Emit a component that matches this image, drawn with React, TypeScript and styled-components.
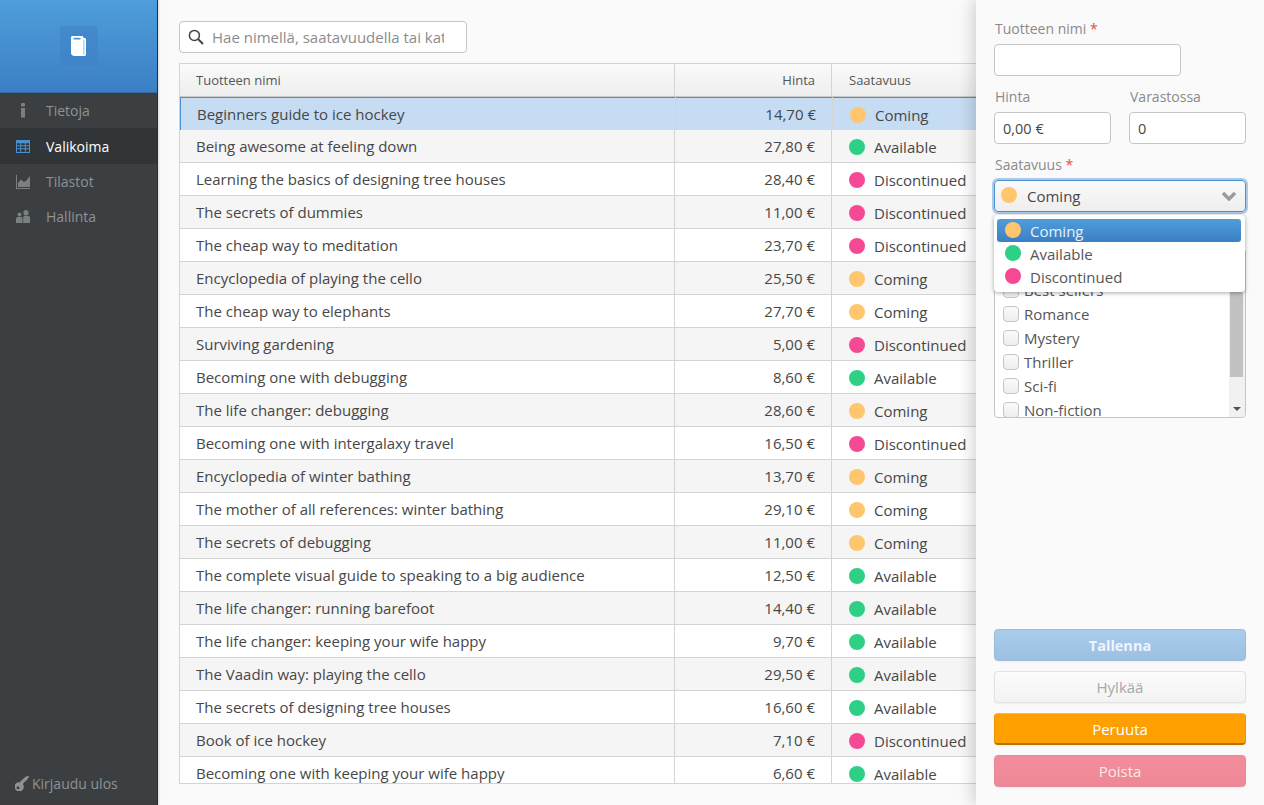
import React from "react";
import styled, { createGlobalStyle } from "styled-components";

type Status = "Coming" | "Available" | "Discontinued";

const statusColor: Record<Status, string> = {
    Coming: "#ffc66e",
    Available: "#2dd085",
    Discontinued: "#f54993",
};

const products: [string, string, Status][] = [
    ["Beginners guide to ice hockey", "14,70 €", "Coming"],
    ["Being awesome at feeling down", "27,80 €", "Available"],
    ["Learning the basics of designing tree houses", "28,40 €", "Discontinued"],
    ["The secrets of dummies", "11,00 €", "Discontinued"],
    ["The cheap way to meditation", "23,70 €", "Discontinued"],
    ["Encyclopedia of playing the cello", "25,50 €", "Coming"],
    ["The cheap way to elephants", "27,70 €", "Coming"],
    ["Surviving gardening", "5,00 €", "Discontinued"],
    ["Becoming one with debugging", "8,60 €", "Available"],
    ["The life changer: debugging", "28,60 €", "Coming"],
    ["Becoming one with intergalaxy travel", "16,50 €", "Discontinued"],
    ["Encyclopedia of winter bathing", "13,70 €", "Coming"],
    ["The mother of all references: winter bathing", "29,10 €", "Coming"],
    ["The secrets of debugging", "11,00 €", "Coming"],
    ["The complete visual guide to speaking to a big audience", "12,50 €", "Available"],
    ["The life changer: running barefoot", "14,40 €", "Available"],
    ["The life changer: keeping your wife happy", "9,70 €", "Available"],
    ["The Vaadin way: playing the cello", "29,50 €", "Available"],
    ["The secrets of designing tree houses", "16,60 €", "Available"],
    ["Book of ice hockey", "7,10 €", "Discontinued"],
    ["Becoming one with keeping your wife happy", "6,60 €", "Available"],
];

const categories = ["Children's books", "Best sellers", "Romance", "Mystery", "Thriller", "Sci-fi", "Non-fiction"];

const App = () => {
    return (
        <Page>
            <GlobalStyle/>
            <Sidebar>
                <Brand>
                    <BrandTile>
                        <svg width="17" height="22" viewBox="0 0 17 22">
                            <path d="M1 2.5C1 1.6 1.6 1 2.5 1H12c.8 0 1.4.6 1.4 1.4V3h1.1c.8 0 1.5.7 1.5 1.5V19.5c0 .8-.7 1.5-1.5 1.5H4.5C2.5 21 1 19.6 1 18Z" fill="#fff"/>
                            <rect x="3.5" y="2.8" width="7" height="1.7" fill="#4a94d4"/>
                            <rect x="13.4" y="4.5" width="1" height="15" fill="#8fbde6"/>
                        </svg>
                    </BrandTile>
                </Brand>
                <NavItem>
                    <NavIcon>
                        <svg width="6" height="15" viewBox="0 0 6 15" fill="currentColor">
                            <rect x="1" y="0" width="4" height="3.4" rx="1"/>
                            <path d="M0.8 5H5V14.5H1V6.2H.8Z"/>
                        </svg>
                    </NavIcon>
                    Tietoja
                </NavItem>
                <NavItem $active>
                    <NavIcon>
                        <svg width="14" height="13" viewBox="0 0 14 13" fill="#4a90d0">
                            <path d="M0 0H14V13H0ZM1 3.2V5.2H4.2V3.2ZM5.2 3.2V5.2H8.8V3.2ZM9.8 3.2V5.2H13V3.2ZM1 6.2V8.2H4.2V6.2ZM5.2 6.2V8.2H8.8V6.2ZM9.8 6.2V8.2H13V6.2ZM1 9.2V12H4.2V9.2ZM5.2 9.2V12H8.8V9.2ZM9.8 9.2V12H13V9.2Z" fillRule="evenodd"/>
                        </svg>
                    </NavIcon>
                    Valikoima
                </NavItem>
                <NavItem>
                    <NavIcon>
                        <svg width="14" height="14" viewBox="0 0 14 14" fill="currentColor">
                            <path d="M0 0H1V13H14V14H0Z"/>
                            <path d="M2 12V8L5 4.5L8 7L10.5 5.5L14 1V12Z"/>
                        </svg>
                    </NavIcon>
                    Tilastot
                </NavItem>
                <NavItem>
                    <NavIcon>
                        <svg width="14" height="13" viewBox="0 0 14 13" fill="currentColor">
                            <circle cx="3.5" cy="4.5" r="2"/>
                            <path d="M0 13V9C0 7.6 1 7 2 7H5C6 7 6.5 7.6 6.5 9V13Z"/>
                            <circle cx="10" cy="2.7" r="2.6"/>
                            <path d="M7.2 13V7.5C7.2 6.4 8 5.8 9 5.8H11C12.7 5.8 14 6.6 14 8V13Z"/>
                        </svg>
                    </NavIcon>
                    Hallinta
                </NavItem>
                <Logout>
                    <svg width="14" height="15" viewBox="0 0 14 15" fill="currentColor">
                        <path d="M4.6 6.2 10.8.4 13.6 0 14 1.6 12.6 2.2 12.4 4 10.8 4.2 10.6 5.8 9 6 8 8.2A4.6 4.6 0 1 1 4.6 6.2ZM3 10.2A1.5 1.5 0 1 0 3 13.2 1.5 1.5 0 0 0 3 10.2Z" fillRule="evenodd"/>
                    </svg>
                    Kirjaudu ulos
                </Logout>
            </Sidebar>

            <Main>
                <Search>
                    <svg width="16" height="16" viewBox="0 0 16 16" fill="none" stroke="#444" strokeWidth="1.5">
                        <circle cx="6.4" cy="6.4" r="5"/>
                        <path d="M10 10L15 15" strokeWidth="2"/>
                    </svg>
                    <SearchInput placeholder="Hae nimellä, saatavuudella tai kategorialla"/>
                </Search>
                <Table>
                    <HeadRow>
                        <HeadCell $col="name">Tuotteen nimi</HeadCell>
                        <HeadCell $col="price">Hinta</HeadCell>
                        <HeadCell $col="status">Saatavuus</HeadCell>
                    </HeadRow>
                    {products.map(([name, price, status], i) => (
                        <Row key={name} $even={i % 2 === 1} $selected={i === 0}>
                            <Cell $col="name">{name}</Cell>
                            <Cell $col="price">{price}</Cell>
                            <Cell $col="status">
                                <StatusText>
                                    <Dot $status={status}/>
                                    {status}
                                </StatusText>
                            </Cell>
                        </Row>
                    ))}
                </Table>
            </Main>

            <Panel>
                <Field>
                    <Label>Tuotteen nimi <Star>*</Star></Label>
                    <NameInput/>
                </Field>
                <FieldRow>
                    <Field>
                        <Label>Hinta</Label>
                        <TextInput defaultValue="0,00 €"/>
                    </Field>
                    <Field>
                        <Label>Varastossa</Label>
                        <TextInput defaultValue="0"/>
                    </Field>
                </FieldRow>
                <Field>
                    <Label>Saatavuus <Star>*</Star></Label>
                    <Select>
                        <SelectDot $status="Coming"/>
                        <SelectValue>Coming</SelectValue>
                        <svg width="16" height="10" viewBox="0 0 16 10" fill="none" stroke="#9a9a9a" strokeWidth="3.4">
                            <path d="M2 2L8 8L14 2"/>
                        </svg>
                        <Dropdown>
                            {(["Coming", "Available", "Discontinued"] as Status[]).map((s, i) => (
                                <Option key={s} $active={i === 0}>
                                    <SelectDot $status={s}/>
                                    {s}
                                </Option>
                            ))}
                        </Dropdown>
                    </Select>
                </Field>
                <Field>
                    <Label>Kategoria</Label>
                    <CategoryBox>
                        <CategoryList>
                            {categories.map((c) => (
                                <Category key={c}>
                                    <Check/>
                                    {c}
                                </Category>
                            ))}
                        </CategoryList>
                        <ScrollTrack>
                            <ScrollThumb/>
                            <ScrollArrow/>
                        </ScrollTrack>
                    </CategoryBox>
                </Field>
                <Buttons>
                    <SaveButton>Tallenna</SaveButton>
                    <DiscardButton>Hylkää</DiscardButton>
                    <CancelButton>Peruuta</CancelButton>
                    <DeleteButton>Poista</DeleteButton>
                </Buttons>
            </Panel>
        </Page>
    );
};

export default App;

const GlobalStyle = createGlobalStyle`
    html, body {
        margin: 0;
        height: 100%;
        overflow: hidden;
    }
    #root {
        height: 100%;
    }
    * {
        box-sizing: border-box;
    }
    body {
        font-family: "Open Sans", "Liberation Sans", sans-serif;
        font-size: 14px;
        color: #474747;
    }
`

const Page = styled.div`
    position: relative;
    display: flex;
    height: 805px;
    overflow: hidden;
    background: #fafafa;
`

const Sidebar = styled.nav`
    width: 158px;
    flex-shrink: 0;
    display: flex;
    flex-direction: column;
    background: #3b3f42;
    border-right: 1px solid #2b2e30;
    box-shadow: 1px 0 2px rgba(0, 0, 0, 0.12);
`

const Brand = styled.div`
    height: 93px;
    display: flex;
    align-items: center;
    justify-content: center;
    background: linear-gradient(to bottom, #4f9edb, #3b7fc4);
    border-bottom: 1px solid #34699f;
`

const BrandTile = styled.div`
    width: 38px;
    height: 40px;
    margin-top: -1px;
    display: flex;
    align-items: center;
    justify-content: center;
    border-radius: 4px;
    background: rgba(62, 130, 196, 0.55);
`

const NavItem = styled.div<{ $active?: boolean }>`
    height: ${(p) => (p.$active ? "36px" : "35px")};
    display: flex;
    align-items: center;
    font-size: 14px;
    color: ${(p) => (p.$active ? "#fff" : "#8f9294")};
    background: ${(p) => (p.$active ? "#323538" : "transparent")};
`

const NavIcon = styled.span`
    width: 46px;
    padding-left: 16px;
    padding-right: 16px;
    flex-shrink: 0;
    display: flex;
    justify-content: center;
    color: #7c7f81;
`

const Logout = styled.div`
    margin-top: auto;
    height: 44px;
    padding-left: 15px;
    display: flex;
    align-items: center;
    gap: 3px;
    font-size: 14px;
    color: #8f9294;
`

const Main = styled.main`
    flex: 1;
    min-width: 0;
    display: flex;
    flex-direction: column;
    padding: 21px 21px 21px;
`

const Search = styled.label`
    width: 288px;
    height: 32px;
    flex-shrink: 0;
    display: flex;
    align-items: center;
    gap: 8px;
    padding-left: 8px;
    padding-right: 22px;
    margin-bottom: 10px;
    background: #fff;
    border: 1px solid #c5c5c5;
    border-radius: 4px;
`

const SearchInput = styled.input`
    flex: 1;
    min-width: 0;
    padding: 0;
    border: 0;
    outline: 0;
    background: transparent;
    font: 400 15px "Open Sans", sans-serif;
    &::placeholder {
        color: #8c8c8c;
        opacity: 1;
    }
`

const Table = styled.div`
    flex: 1;
    min-height: 0;
    overflow: hidden;
    background: #fff;
    border: 1px solid #d4d4d4;
`

const colStyles = {
    name: `width: 495px; padding-left: 16px;`,
    price: `width: 157px; padding-right: 16px; justify-content: flex-end;`,
    status: `flex: 1; padding-left: 17px;`,
}

type Col = keyof typeof colStyles;

const HeadRow = styled.div`
    height: 33px;
    display: flex;
    background: linear-gradient(to bottom, #fafafa, #eeeeee);
    border-bottom: 1px solid #c9c9c9;
`

const HeadCell = styled.div<{ $col: Col }>`
    ${(p) => colStyles[p.$col]}
    display: flex;
    align-items: center;
    font-size: 13px;
    color: #555;
    border-right: ${(p) => (p.$col === "status" ? "0" : "1px solid #d4d4d4")};
`

const Row = styled.div<{ $even: boolean; $selected: boolean }>`
    height: 33px;
    display: flex;
    background: ${(p) => (p.$selected ? "#c5dcf2" : p.$even ? "#f5f5f5" : "#fff")};
    border-bottom: 1px solid #d4d4d4;
    ${(p) => p.$selected && `
        border-bottom: 0;
        padding-left: 1px;
        box-shadow: inset 1px 1px 0 #4a90d0;
    `}
`

const Cell = styled.div<{ $col: Col }>`
    ${(p) => colStyles[p.$col]}
    display: flex;
    align-items: center;
    flex-shrink: 0;
    font-size: 15px;
    white-space: nowrap;
    border-right: ${(p) => (p.$col === "status" ? "0" : "1px solid #d4d4d4")};
`

const StatusText = styled.span`
    display: flex;
    align-items: center;
    gap: 9px;
    margin-top: 2px;
`

const Dot = styled.span<{ $status: Status }>`
    width: 16px;
    height: 16px;
    flex-shrink: 0;
    border-radius: 50%;
    background: ${(p) => statusColor[p.$status]};
`

const SelectDot = styled(Dot)`
    margin-top: -2px;
`

const Panel = styled.aside`
    position: absolute;
    top: 0;
    right: 0;
    bottom: 0;
    width: 288px;
    display: flex;
    flex-direction: column;
    gap: 11px;
    padding: 19px 18px 18px;
    background: #fafafa;
    box-shadow: -4px 0 14px rgba(0, 0, 0, 0.16);
`

const Field = styled.div`
    display: flex;
    flex-direction: column;
    min-width: 0;
`

const FieldRow = styled.div`
    display: grid;
    grid-template-columns: 117px 117px;
    gap: 18px;
`

const Label = styled.label`
    height: 20px;
    margin-bottom: 5px;
    padding-left: 1px;
    line-height: 20px;
    font-size: 14px;
    color: #8a8a8a;
`

const Star = styled.span`
    color: #ed473b;
`

const TextInput = styled.input`
    width: 100%;
    height: 32px;
    padding: 0 8px;
    background: #fff;
    border: 1px solid #c5c5c5;
    border-radius: 4px;
    outline: 0;
    font: 400 14.5px "Open Sans", sans-serif;
    color: #474747;
`

const NameInput = styled(TextInput)`
    width: 187px;
`

const Select = styled.div`
    position: relative;
    height: 32px;
    display: flex;
    align-items: center;
    gap: 10px;
    padding: 0 8px 0 6px;
    background: linear-gradient(to bottom, #fafafa, #eeeeee);
    border: 1px solid #4a90d0;
    border-radius: 4px;
    box-shadow: 0 0 0 2px rgba(74, 144, 208, 0.45);
    font-size: 15px;
`

const SelectValue = styled.span`
    flex: 1;
`

const Dropdown = styled.div`
    position: absolute;
    z-index: 2;
    top: 34px;
    left: -1px;
    width: 251px;
    padding: 4px 4px 4px 3px;
    background: #fff;
    border-radius: 4px;
    box-shadow: 0 1px 4px rgba(0, 0, 0, 0.35);
`

const Option = styled.div<{ $active: boolean }>`
    height: 23px;
    display: flex;
    align-items: center;
    gap: 9px;
    padding-left: 8px;
    border-radius: 3px;
    color: ${(p) => (p.$active ? "#e6f1fb" : "#555")};
    background: ${(p) => (p.$active ? "linear-gradient(to bottom, #4f9edb, #3b7fc4)" : "transparent")};
`

const CategoryBox = styled.div`
    height: 170px;
    display: flex;
    overflow: hidden;
    background: #fff;
    border: 1px solid #c5c5c5;
    border-radius: 4px;
`

const CategoryList = styled.div`
    flex: 1;
    padding: 5px 0 0 8px;
`

const Category = styled.div`
    height: 24px;
    display: flex;
    align-items: center;
    gap: 5px;
    font-size: 15px;
    color: #555;
`

const Check = styled.span`
    width: 16px;
    height: 16px;
    border: 1px solid #c5c5c5;
    border-radius: 4px;
    background: linear-gradient(to bottom, #fafafa, #eeeeee);
`

const ScrollTrack = styled.div`
    width: 16px;
    display: flex;
    flex-direction: column;
    background: #f1f1f1;
    padding-left: 1px;
`

const ScrollThumb = styled.div`
    width: 13px;
    height: 128px;
    background: #c1c1c1;
`

const ScrollArrow = styled.div`
    margin: auto 0 6px 3px;
    width: 0;
    height: 0;
    border-left: 4px solid transparent;
    border-right: 4px solid transparent;
    border-top: 4px solid #505050;
`

const Buttons = styled.div`
    margin-top: auto;
    display: flex;
    flex-direction: column;
    gap: 10px;
`

const Button = styled.button`
    height: 32px;
    width: 252px;
    padding: 0;
    border-radius: 4px;
    font: 400 15px "Open Sans", sans-serif;
    box-shadow: 0 1px 2px rgba(0, 0, 0, 0.05);
`

const SaveButton = styled(Button)`
    font-size: 14.5px;
    font-weight: 700;
    color: #eef5fc;
    background: linear-gradient(to bottom, #a9cdeb, #9dbfe3);
    border: 1px solid #9cbcdc;
`

const DiscardButton = styled(Button)`
    color: #a8a8a8;
    background: linear-gradient(to bottom, #fbfbfb, #f3f3f3);
    border: 1px solid #e2e2e2;
`

const CancelButton = styled(Button)`
    color: #fff;
    background: #ff9f00;
    border: 1px solid #f09700;
    border-top-color: #ffb53f;
    border-bottom: 2px solid #b87400;
`

const DeleteButton = styled(Button)`
    color: #fde8ea;
    background: linear-gradient(to bottom, #f48d9b, #ee8896);
    border: 1px solid #e5899a;
`
